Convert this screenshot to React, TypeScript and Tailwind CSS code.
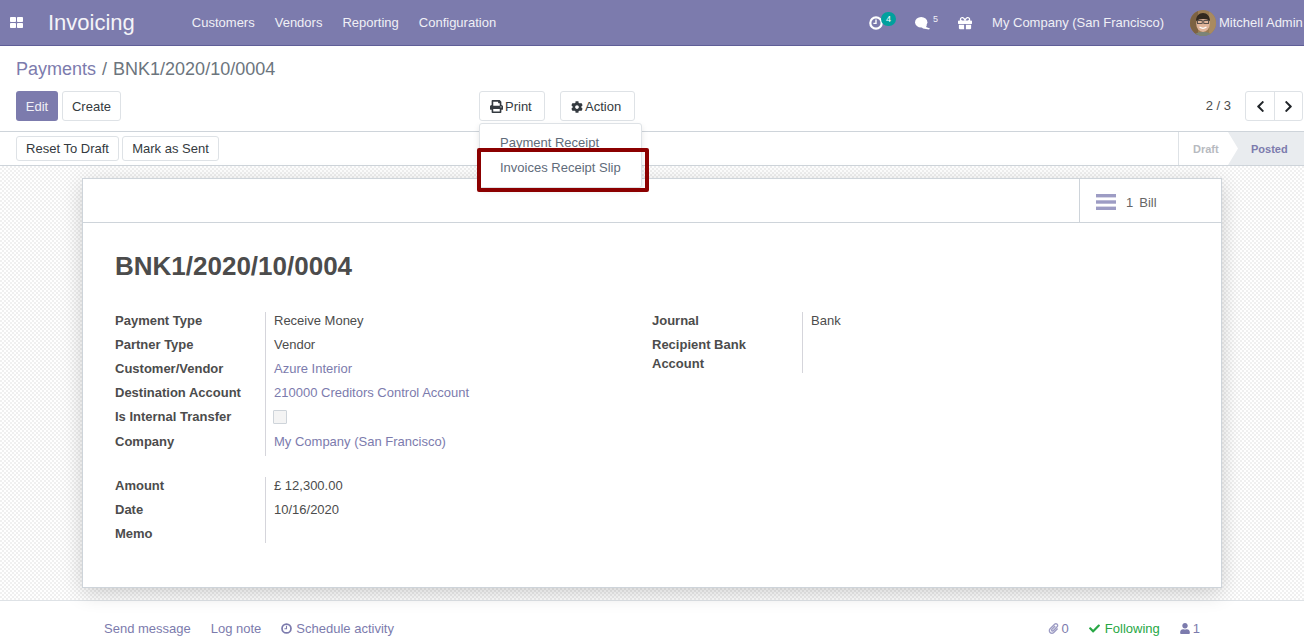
import { FaCog, FaPrint, FaCheck, FaUser, FaPaperclip, FaGift, FaChevronLeft, FaChevronRight } from 'react-icons/fa'

const menus = ['Customers', 'Vendors', 'Reporting', 'Configuration']

const Avatar = () => (
  <svg viewBox="0 0 26 26" className="w-[26px] h-[26px] rounded-full">
    <rect width="26" height="26" fill="#9a7b52" />
    <path d="M0 0h8v26H0z" fill="#7d6242" />
    <path d="M19 0h7v26h-7z" fill="#a98a5f" />
    <ellipse cx="13" cy="13.5" rx="6.8" ry="8.5" fill="#e0b49a" />
    <path d="M6 11c0-5 3-8 7-8s7 3 7 8c-3-2.6-10-3-14 0z" fill="#33291f" />
    <rect x="7.4" y="10.6" width="4.8" height="2.8" fill="none" stroke="#3a3a3a" strokeWidth="0.8" />
    <rect x="13.8" y="10.6" width="4.8" height="2.8" fill="none" stroke="#3a3a3a" strokeWidth="0.8" />
    <path d="M9.5 17c2.2 1.6 4.8 1.6 7 0" stroke="#fff" strokeWidth="1.2" fill="none" />
    <path d="M4 26c1-3 4-4 9-4s8 1 9 4z" fill="#7b8478" />
  </svg>
)

const Clock = ({ className }: { className: string }) => (
  <svg viewBox="0 0 14 14" className={className} fill="none" stroke="currentColor">
    <circle cx="7" cy="7" r="5.7" strokeWidth="2.2" />
    <path d="M7 3.6V7.4H4.4" strokeWidth="1.4" />
  </svg>
)

const Field = ({ label, children, link, rowClass }: { label: string; children?: React.ReactNode; link?: boolean; rowClass: string }) => (
  <div className={`flex leading-[18px] ${rowClass}`}>
    <div className="w-[150px] pr-2 font-bold text-[#4c4c4c]">{label}</div>
    <div className={`pl-2 border-l border-[#d5d5db] ${link ? 'text-[#7c7bad]' : 'text-[#4c4c4c]'}`}>
      {children}
    </div>
  </div>
)

export default function App() {
  return (
    <div className="relative h-screen overflow-hidden flex flex-col bg-white text-[13px] text-[#4c4c4c] font-['Liberation_Sans',Arial,sans-serif]">
      {/* Top navbar */}
      <header className="h-[46px] shrink-0 bg-[#7c7bad] border-b border-[#5f5e97] flex items-center text-white whitespace-nowrap">
        <svg viewBox="0 0 13 11" className="ml-[10px] w-[13px] h-[11px]" fill="#fff">
          <rect width="6" height="5" rx="0.8" />
          <rect x="7" width="6" height="5" rx="0.8" />
          <rect y="6" width="6" height="5" rx="0.8" />
          <rect x="7" y="6" width="6" height="5" rx="0.8" />
        </svg>
        <span className="ml-[25px] text-[22px] text-[#f4f4f8]">Invoicing</span>
        <nav className="ml-[57px] flex gap-5 text-[#f0f0f6]">
          {menus.map(m => <span key={m}>{m}</span>)}
        </nav>
        <div className="ml-auto flex items-center text-[#f0f0f6]">
          <span className="relative mr-[32px] mt-[1px]">
            <Clock className="w-[14px] h-[14px] text-white" />
            <span className="absolute left-[12px] -top-[4px] w-[15px] h-[14px] rounded-full bg-[#00a09d] text-[9px] leading-[14px] text-center text-white">4</span>
          </span>
          <span className="flex items-start mr-[20px]">
            <svg viewBox="0 0 15 13" className="w-[15px] h-[13px] mt-[1px]" fill="#fff">
              <ellipse cx="6.2" cy="5.2" rx="6.2" ry="5.2" />
              <path d="M6 9.5l6-1.5-1 2 4 1.5-1 1-6-1z" />
            </svg>
            <span className="ml-[3px] -mt-[3px] w-[5px] text-[9px]">5</span>
          </span>
          <FaGift className="w-[14px] h-[14px] text-white mr-[20px]" />
          <span>My Company (San Francisco)</span>
          <span className="ml-[26px]"><Avatar /></span>
          <span className="ml-[3px] w-[85px]">Mitchell Admin</span>
        </div>
      </header>

      {/* Control panel */}
      <section className="h-[86px] shrink-0 border-b border-[#ced4da] px-4 pt-[11px]">
        <div className="flex text-[18px] leading-[24px] text-[#6c757d]">
          <span className="text-[#7c7bad]">Payments</span>
          <span className="ml-[6px]">/</span>
          <span className="ml-[6px]">BNK1/2020/10/0004</span>
        </div>
        <div className="mt-[10px] flex items-center">
          <button className="w-[42px] h-[30px] pt-[1px] rounded-[3px] bg-[#7c7bad] text-[#f0f0f6]">Edit</button>
          <button className="ml-1 w-[59px] h-[30px] pt-[1px] rounded-[3px] border border-[#dee2e6] text-[#343a40]">Create</button>
          <button className="ml-[358px] w-[66px] h-[30px] pt-[1px] pl-[10px] rounded-[3px] border border-[#dee2e6] text-[#343a40] flex items-center gap-[2px]">
            <FaPrint className="w-[13px] h-[13px]" /> Print
          </button>
          <button className="ml-[15px] w-[75px] h-[30px] pt-[1px] pl-[10px] rounded-[3px] border border-[#dee2e6] text-[#343a40] flex items-center gap-[2px]">
            <FaCog className="w-[12px] h-[12px]" /> Action
          </button>
          <span className="ml-auto text-[#4c4c4c]">2 / 3</span>
          <div className="ml-[14px] -mr-[15px] flex h-[30px] rounded-[3px] border border-[#dee2e6] text-[#212529]">
            <span className="w-[29px] flex items-center justify-center border-r border-[#dee2e6]">
              <FaChevronLeft className="w-[13px] h-[13px]" />
            </span>
            <span className="w-[27px] flex items-center justify-center">
              <FaChevronRight className="w-[13px] h-[13px]" />
            </span>
          </div>
        </div>
      </section>

      {/* Status bar */}
      <section className="h-[34px] shrink-0 border-b border-[#ced4da] pl-4 flex items-center">
        <button className="w-[103px] h-[25px] rounded-[3px] border border-[#dee2e6] text-[#343a40]">Reset To Draft</button>
        <button className="ml-[3px] w-[97px] h-[25px] rounded-[3px] border border-[#dee2e6] text-[#343a40]">Mark as Sent</button>
        <div className="ml-auto flex h-full text-[11px] font-bold">
          <div className="w-[50px] pt-[1px] border-l border-[#dee2e6] flex items-center pl-[14px] text-[#b7bac0]">Draft</div>
          <div className="w-[76px] pt-[1px] bg-[#e9ecef] flex items-center pl-[23px] text-[#7c7bad] [clip-path:polygon(0_0,100%_0,100%_100%,0_100%,10px_50%)]">Posted</div>
        </div>
      </section>

      {/* Form area */}
      <main className="h-[435px] shrink-0 border-b border-[#dee2e6] px-[82px] pt-3 bg-[repeating-conic-gradient(#f0f0f0_0%_25%,#ffffff_0%_50%)] bg-[length:4px_4px]">
        <div className="h-[410px] bg-white border border-[#ced4da] shadow-[0_5px_20px_-1px_rgba(0,0,0,0.2)]">
          <div className="h-[44px] border-b border-[#ced4da] flex justify-end">
            <div className="w-[142px] border-l border-[#ced4da] flex items-center pt-[4px] pl-[16px] text-[#666]">
              <svg viewBox="0 0 20 16" className="w-[20px] h-[16px] -mt-[1px]" fill="#9d9cc4">
                <rect width="20" height="3.4" />
                <rect y="6.3" width="20" height="3.4" />
                <rect y="12.6" width="20" height="3.4" />
              </svg>
              <span className="ml-[10px]">1</span>
              <span className="ml-[6px]">Bill</span>
            </div>
          </div>
          <div className="px-8 pt-[25px]">
            <h1 className="text-[26px] leading-[36px] font-bold text-[#4c4c4c]">BNK1/2020/10/0004</h1>
            <div className="mt-7 grid grid-cols-[537px_1fr]">
              <div>
                <Field rowClass="h-6" label="Payment Type">Receive Money</Field>
                <Field rowClass="h-6" label="Partner Type">Vendor</Field>
                <Field rowClass="h-6" label="Customer/Vendor" link>Azure Interior</Field>
                <Field rowClass="h-6" label="Destination Account" link>210000 Creditors Control Account</Field>
                <Field rowClass="h-[25px]" label="Is Internal Transfer">
                  <span className="block -ml-[1px] mt-[2px] w-[14px] h-[14px] rounded-[1px] border border-[#ced4da] bg-[#f4f4f4]" />
                </Field>
                <Field rowClass="h-[23px]" label="Company" link>My Company (San Francisco)</Field>
                <div className="h-[21px]" />
                <Field rowClass="h-6" label="Amount">£ 12,300.00</Field>
                <Field rowClass="h-6" label="Date">10/16/2020</Field>
                <Field rowClass="h-[18px]" label="Memo" />
              </div>
              <div className="flex items-start leading-[18px]">
                <div className="w-[150px] font-bold">
                  <div className="h-[23px]">Journal</div>
                  <div className="leading-[19px] pr-8">Recipient Bank Account</div>
                </div>
                <div className="h-[61px] pl-2 border-l border-[#d5d5db]">Bank</div>
              </div>
            </div>
          </div>
        </div>
      </main>

      {/* Chatter */}
      <footer className="flex-1 px-[104px] flex items-start pt-[18px] text-[#7c7bad]">
        <span>Send message</span>
        <span className="ml-[20px]">Log note</span>
        <span className="ml-[20px] flex items-center gap-[4px]">
          <Clock className="w-[11px] h-[11px]" /> Schedule activity
        </span>
        <span className="ml-auto flex items-center gap-[3px] text-[#9d9cc4]">
          <FaPaperclip className="w-[11px] h-[11px]" /> <span className="text-[#7c7bad]">0</span>
        </span>
        <span className="ml-[20px] flex items-center gap-[5px] text-[#28a745]">
          <FaCheck className="w-[11px] h-[11px]" /> Following
        </span>
        <span className="ml-[20px] flex items-center gap-[3px]">
          <FaUser className="w-[10px] h-[11px]" /> 1
        </span>
      </footer>

      {/* Open print dropdown with the highlight drawn over it */}
      <div className="absolute left-[479px] top-[123px] w-[163px] h-[65px] bg-white border border-[#dee2e6] rounded-[3px] pt-[10px] shadow-[0_3px_6px_rgba(0,0,0,0.1)] text-[#5f6b7a]">
        <div className="pl-5 h-[25px] leading-[18px]">Payment Receipt</div>
        <div className="pl-5 h-[25px] leading-[18px]">Invoices Receipt Slip</div>
      </div>
      <div className="absolute left-[477px] top-[148px] w-[172px] h-[44px] border-[4px] border-[#8b0000] rounded-[2px]" />
    </div>
  )
}
